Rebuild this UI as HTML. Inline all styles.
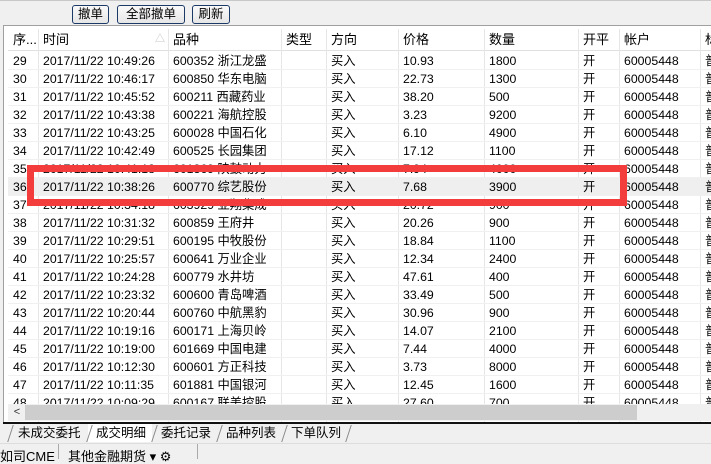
<!DOCTYPE html>
<html><head><meta charset="utf-8"><style>
*{margin:0;padding:0;box-sizing:border-box}
body{width:711px;height:459px;overflow:hidden;background:#f0f0f0;font-family:"Liberation Sans","Noto Sans CJK SC",sans-serif;font-size:12px;color:#000;position:relative}
.btn{position:absolute;top:5px;height:19px;border:1px solid #1c3a66;border-radius:3px;background:linear-gradient(#fafafa,#e6e6e6);font-size:12.5px;line-height:17px;text-align:center}
#tbl{position:absolute;left:3px;top:25px;width:708px;height:398px;border:1px solid #a0a0a0;border-right:none;background:#fff;overflow:hidden}
.hdr{position:absolute;left:4px;top:3px;height:22px;right:0;background:#fff;border-bottom:1px solid #e0e0e0}
.c{position:absolute;white-space:nowrap;line-height:18px;padding-left:5px;font-size:12.3px}
.vl{position:absolute;top:3px;width:1px;background:#e6e6e6;height:400px}
.row{position:absolute;left:4px;right:0;height:18px;border-bottom:1px solid #f0f0f0}
#sb{position:absolute;left:4px;top:378px;width:706px;height:17px;background:#f0f0f0}
.tab{position:absolute;top:424px;height:18px;font-size:12.5px;line-height:18px;padding:0 4px}
.sl{position:absolute;top:425px;width:1px;height:17px;background:#888;transform:skewX(-18deg)}
</style></head><body>
<div style="position:absolute;left:0;top:0;width:711px;height:1px;background:#c8c8c8"></div>
<div class="btn" style="left:72px;width:37px">撤单</div>
<div class="btn" style="left:117px;width:68px">全部撤单</div>
<div class="btn" style="left:192px;width:38px">刷新</div>
<div id="tbl">
<div class="hdr"></div>
<div id="rows"></div>
<div id="sb"><div style="position:absolute;left:0;top:0;width:18px;height:17px;font-size:11px;line-height:17px;text-align:center;color:#333">&lt;</div><div style="position:absolute;left:17px;top:1px;width:612px;height:15px;background:#cdcdcd"></div></div>
</div>
<div style="position:absolute;left:3px;top:422px;width:708px;height:2px;background:#111"></div>
<div style="position:absolute;left:88px;top:424px;width:64px;height:18px;background:#fff"></div>
<div class="sl" style="left:10px"></div>
<div class="tab" style="left:14px">未成交委托</div>
<div class="sl" style="left:89px"></div>
<div class="tab" style="left:92px">成交明细</div>
<div class="sl" style="left:154px"></div>
<div class="tab" style="left:157px">委托记录</div>
<div class="sl" style="left:219px"></div>
<div class="tab" style="left:222px">品种列表</div>
<div class="sl" style="left:284px"></div>
<div class="tab" style="left:287px">下单队列</div>
<div class="sl" style="left:348px"></div>
<div style="position:absolute;left:0;top:443px;width:711px;height:1px;background:#ddd"></div>
<div style="position:absolute;left:0;top:450px;font-size:13px;line-height:14px">如司CME</div>
<div style="position:absolute;left:58px;top:444px;width:1px;height:15px;background:#aaa"></div>
<div style="position:absolute;left:68px;top:450px;font-size:13px;line-height:14px">其他金融期货 ▾ ⚙</div>
<div style="position:absolute;left:197px;top:444px;width:1px;height:15px;background:#aaa"></div>
<div style="position:absolute;left:27px;top:165px;width:600px;height:41px;border:7px solid #f33c3c"></div>
<script>
var cols=[[4,"序..."],[34,"时间"],[164,"品种"],[277,"类型"],[322,"方向"],[394,"价格"],[480,"数量"],[574,"开平"],[615,"帐户"],[696,"标"]];
var d=[[29,"10:49:26","600352 浙江龙盛","10.93","1800"],[30,"10:46:17","600850 华东电脑","22.73","1300"],[31,"10:45:52","600211 西藏药业","38.20","500"],[32,"10:43:38","600221 海航控股","3.23","9200"],[33,"10:43:25","600028 中国石化","6.10","4900"],[34,"10:42:49","600525 长园集团","17.12","1100"],[35,"10:41:18","601369 陕鼓动力","7.94","4000"],[36,"10:38:26","600770 综艺股份","7.68","3900"],[37,"10:34:18","603929 亚翔集成","20.72","900"],[38,"10:31:32","600859 王府井","20.26","900"],[39,"10:29:51","600195 中牧股份","18.84","1100"],[40,"10:25:57","600641 万业企业","12.34","2400"],[41,"10:24:28","600779 水井坊","47.61","400"],[42,"10:23:32","600600 青岛啤酒","33.49","500"],[43,"10:20:44","600760 中航黑豹","30.96","900"],[44,"10:19:16","600171 上海贝岭","14.07","2100"],[45,"10:19:00","601669 中国电建","7.44","4000"],[46,"10:12:30","600601 方正科技","3.73","8000"],[47,"10:11:35","601881 中国银河","12.45","1600"],[48,"10:09:29","600167 联美控股","27.60","700"]];
var h="";
cols.forEach(function(c,i){h+='<div class="c" style="left:'+c[0]+'px;top:4px;font-size:13px;line-height:19px">'+c[1]+'</div>';if(i>0)h+='<div class="vl" style="left:'+c[0]+'px"></div>';});
h+='<div class="c" style="left:146px;top:4px;color:#bbb;font-size:10px;line-height:19px">△</div>';
d.forEach(function(r,i){var t=26+i*18;h+='<div class="row" style="top:'+t+'px;'+(r[0]==36?'background:#efefef':'')+'"></div>';
var v=[r[0],"2017/11/22 "+r[1],r[2],"","买入",r[3],r[4],"开","60005448","普"];
v.forEach(function(x,j){h+='<div class="c" style="left:'+cols[j][0]+'px;top:'+t+'px">'+x+'</div>';});});
document.getElementById("rows").innerHTML=h;
</script>
</body></html>
